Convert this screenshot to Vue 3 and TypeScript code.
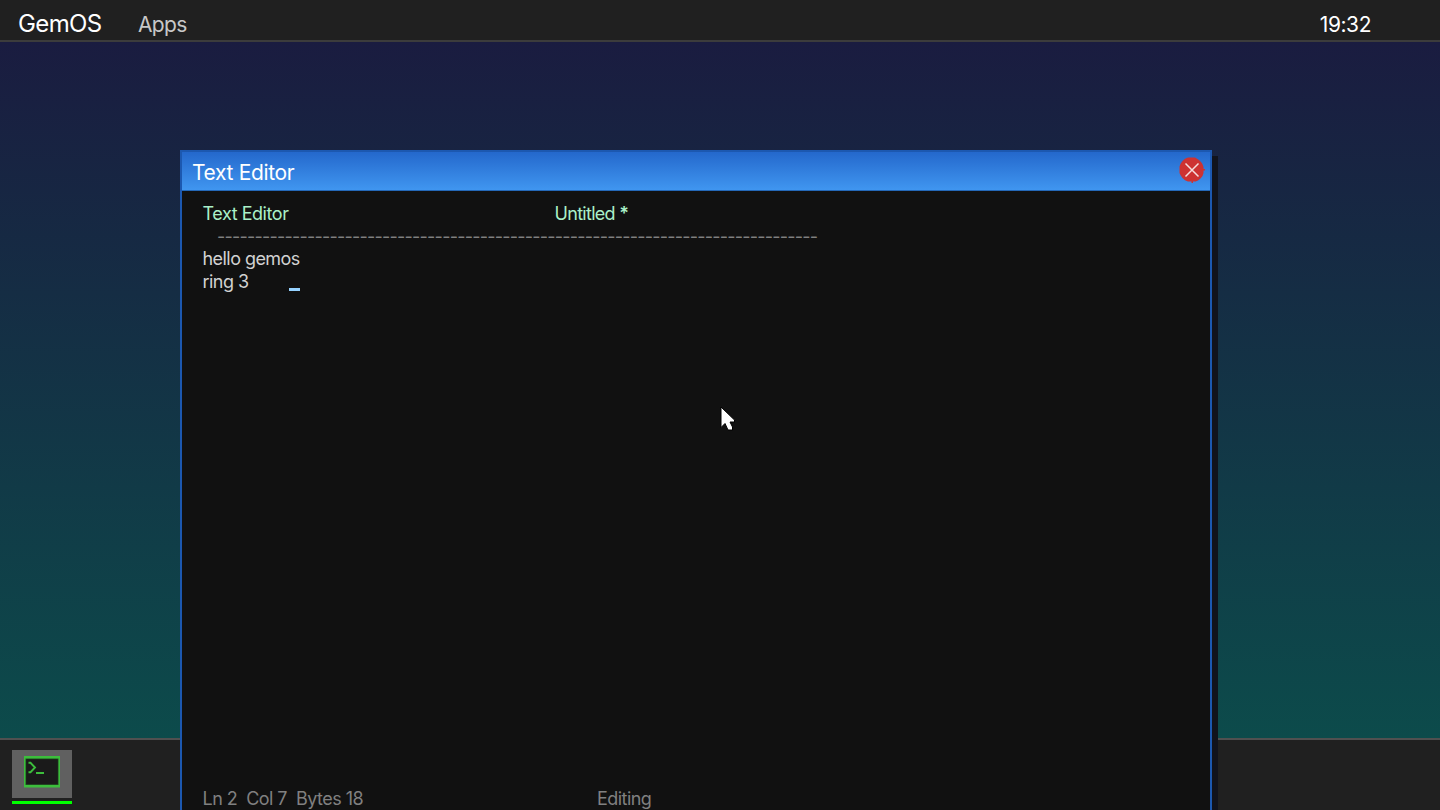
<script setup lang="ts">
const rule = '-'.repeat(80)
const lines: string[] = ['hello gemos', 'ring 3']
</script>

<template>
  <div class="desktop">
    <header class="menubar">
      <span class="brand">GemOS</span>
      <span class="apps">Apps</span>
      <span class="clock">19:32</span>
    </header>
    <main class="wallpaper"></main>
    <footer class="taskbar">
      <div class="task">
        <div class="tile">
          <svg width="36" height="32" viewBox="0 0 36 32">
            <rect width="36" height="31.500" fill="#3cbe3c" />
            <rect x="1.500" y="2.500" width="33" height="26.500" fill="#225022" />
            <rect x="2.200" y="3.200" width="31.600" height="25" fill="#1a1a1a" />
            <path d="M4.500 6.800h2L11 11.500l-4.500 4.700h-2" fill="none" stroke="#3cbe3c" stroke-width="1.900" />
            <rect x="12" y="16" width="8" height="2" fill="#3cbe3c" />
          </svg>
        </div>
        <div class="active"></div>
      </div>
    </footer>

    <section class="window">
      <div class="titlebar">
        <span class="title">Text Editor</span>
        <svg class="close" width="26" height="26" viewBox="0 0 26 26">
          <path d="M9 .5h7l2 1.200 2 1.300 2 2 1.400 2 1.100 3V12h1.500v1.500h-1.500V16l-1 3-2 2.500-2.500 2-2.500 1H14V26h-1.500v-1.500H9l-3-1.300-2.500-2.200-1.800-2.500L.5 16V9.500l1.200-3L3.500 4 6 1.800z" fill="#cd3232" />
          <path d="M6.500 6.500l13 13M19.500 6.500l-13 13" stroke="#f6dcdc" stroke-width="1.500" />
        </svg>
      </div>
      <div class="editor">
        <div class="row heading"><span class="app">Text Editor</span><span class="file">Untitled <b>*</b></span></div>
        <div class="row rule">{{ rule }}</div>
        <div v-for="(line, i) in lines" :key="i" class="row text">
          <span>{{ line }}</span><i v-if="i === lines.length - 1" class="caret"></i>
        </div>
        <div class="row status"><span class="position">Ln 2&nbsp; Col 7&nbsp; Bytes 18</span><span class="mode">Editing</span></div>
      </div>
    </section>

    <svg class="pointer" width="16" height="26" viewBox="0 0 16 26">
      <path d="M1 1v20.500l4-4L8 24h4.500v-3l-2.500-5h4.500v-2z" fill="#fff" stroke="#000" stroke-width="1" />
    </svg>
  </div>
</template>

<style>
body { margin: 0; overflow: hidden; }
</style>

<style scoped>
.desktop { position: relative; width: 1440px; height: 810px; overflow: hidden; display: flex; flex-direction: column; background: #202020; font-family: Inter, "Liberation Sans", sans-serif; }
.desktop * { box-sizing: border-box; }
.menubar { height: 42px; display: flex; flex: none; background: #202020; border-bottom: 2px solid #3c3c3c; white-space: nowrap; }
.brand { width: 120px; padding-left: 18px; font-size: 24px; line-height: 47px; color: #fff; letter-spacing: -0.6px; }
.apps { padding-left: 18px; font-size: 21px; line-height: 50px; color: #c8c8c8; letter-spacing: -0.65px; }
.clock { margin-left: auto; margin-right: 69px; font-size: 21px; line-height: 50px; color: #fff; letter-spacing: -0.45px; }
.wallpaper { height: 696px; flex: none; background: linear-gradient(#1a1c40, #0c4b4b); }
.taskbar { flex: 1; border-top: 2px solid #505050; background: #202020; padding: 10px 12px 0; }
.task { width: 60px; }
.tile { height: 48px; background: #606060; padding: 6px 12px; }
.tile svg { display: block; }
.active { height: 3px; margin-top: 3px; background: #0f0; }
.window { position: absolute; left: 180px; top: 150px; width: 1032px; height: 680px; border: 2px solid #1c58b0; background: #111; box-shadow: 6px 6px 0 #11131c; }
.titlebar { display: flex; justify-content: space-between; height: 39px; padding: 0 5px 0 10px; background: linear-gradient(#2468cc, #4096f0); border-bottom: 1px solid #2468b8; }
.title { font-size: 21px; line-height: 41px; color: #fff; white-space: nowrap; letter-spacing: -0.33px; }
.close { margin-top: 5px; }
.editor { height: 619px; padding: 12px 20px 0; display: flex; flex-direction: column; font-size: 18px; line-height: 22.500px; white-space: nowrap; letter-spacing: -0.55px; }
.row { display: flex; height: 22.500px; }
.heading { color: #aaf0c8; padding-left: 0.5px; }
.app { width: 352px; letter-spacing: -0.45px; }
.file { letter-spacing: -0.7px; }
.file b { font-weight: 600; }
.rule { padding-left: 15px; color: #808080; letter-spacing: -0.775px; }
.text { color: #d2d2d2; padding-left: 0.5px; }
.caret { width: 11px; height: 3px; margin: 17px 0 0 41px; background: #96d2ff; }
.status { margin-top: auto; color: #808080; padding-left: 0.5px; }
.position { width: 394.500px; }
.pointer { position: absolute; left: 720px; top: 406px; }
</style>
